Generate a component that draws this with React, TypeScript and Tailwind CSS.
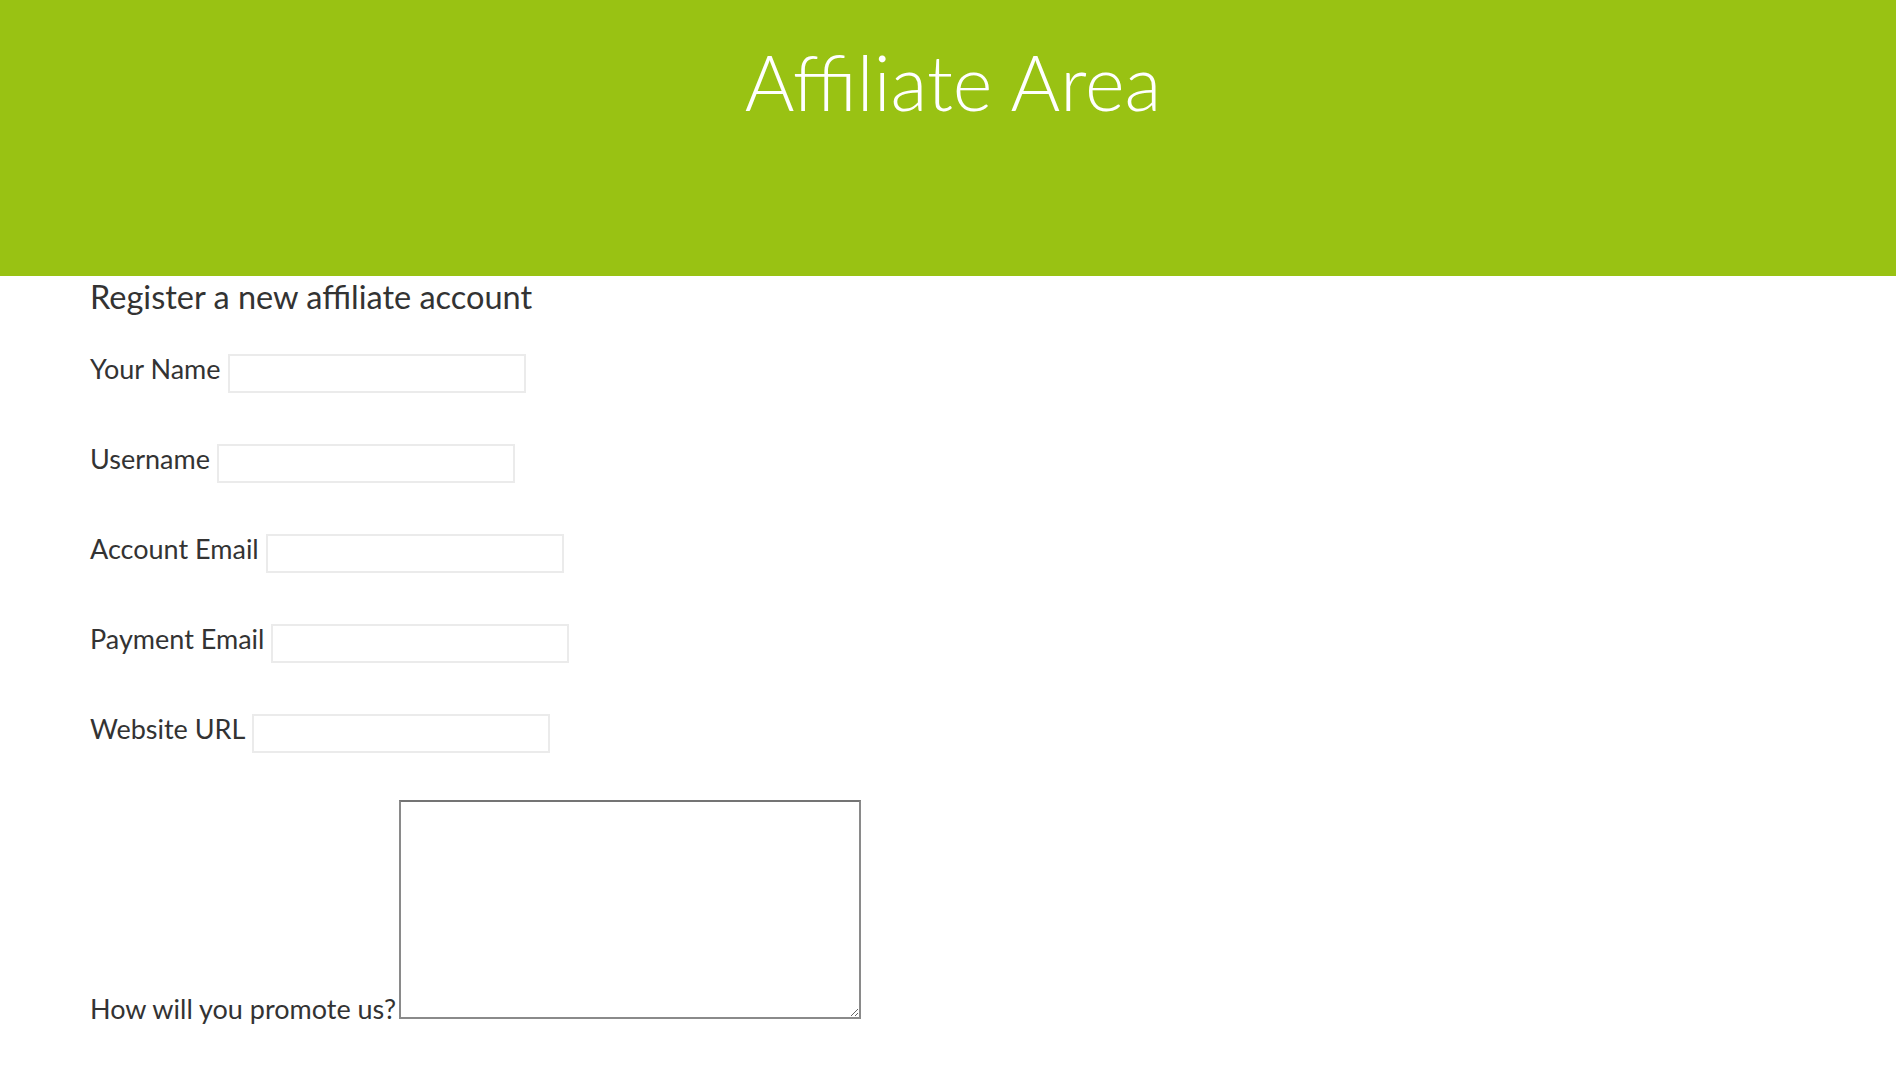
export default function App() {
  const fields = ["Your Name", "Username", "Account Email", "Payment Email", "Website URL"];

  return (
    <main className="min-h-screen bg-white text-[#333333] font-['Lato','Liberation_Sans',sans-serif]">
      <header className="h-[276px] bg-[#99c213]">
        <h1 className="pl-[10px] pt-[37px] text-center text-[76px] font-light leading-[89px] text-white">
          Affiliate Area
        </h1>
      </header>

      <section className="pl-[90px]">
        <h2 className="mt-[2px] text-[32.5px] leading-[38px]">Register a new affiliate account</h2>

        <div className="mt-[36px] flex flex-col gap-[49px]">
          {fields.map((label) => (
            <p key={label} className="flex items-start text-[27px] leading-[34px]">
              <label>{label}</label>
              <input
                type="text"
                className="ml-[7px] mt-[2px] h-[39px] w-[298px] border-2 border-[#ebebeb] bg-white px-2 text-base outline-none"
              />
            </p>
          ))}
        </div>

        <p className="mt-[47px] flex items-end text-[27px] leading-[34px]">
          <label>How will you promote us?</label>
          <textarea className="mb-[7px] ml-[3px] h-[219px] w-[462px] border-2 border-[#8a8a8a] border-t-[#747474] bg-white p-1 text-base outline-none" />
        </p>
      </section>
    </main>
  );
}
